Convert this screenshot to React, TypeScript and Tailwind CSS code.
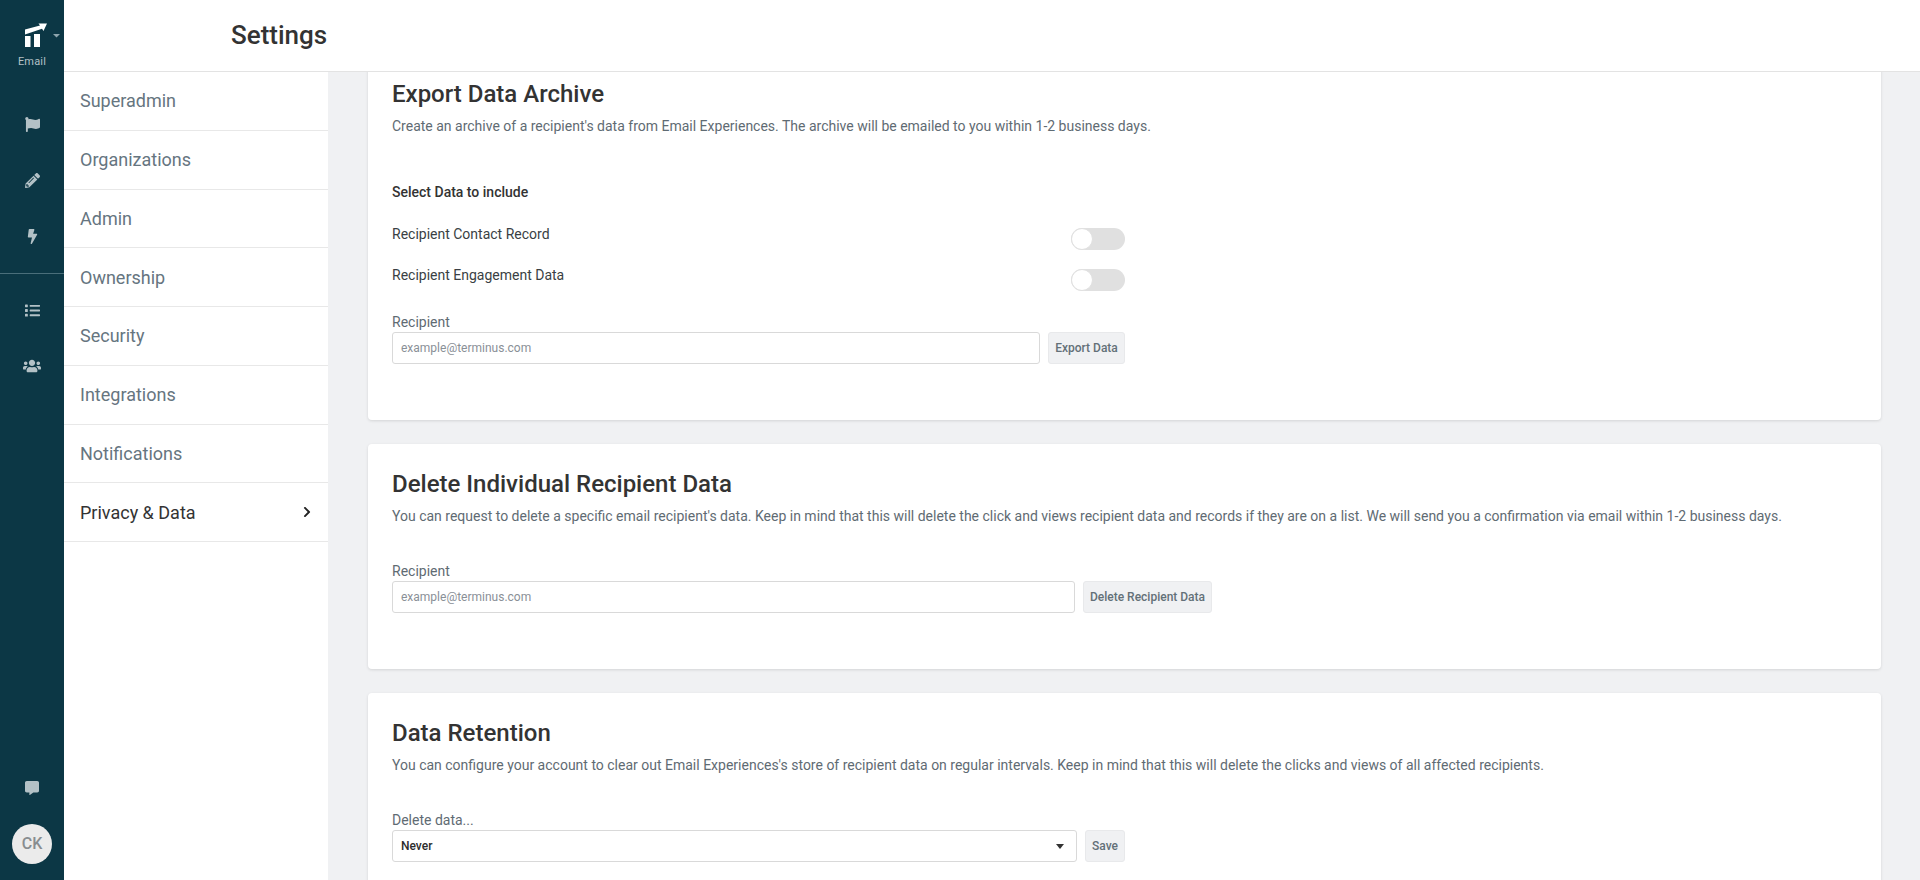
import React from "react";
import { FaFlag, FaPencilAlt, FaBolt, FaList, FaUsers, FaCommentAlt, FaChevronRight } from "react-icons/fa";

const nav = ["Superadmin", "Organizations", "Admin", "Ownership", "Security", "Integrations", "Notifications", "Privacy & Data"];

function Logo() {
  return (
    <svg width="64" height="50" viewBox="0 0 64 50" className="block">
      <path fill="#fff" d="M25 29.5 L40 25.5 L38.5 23.5 L47 23.5 L43.5 31 L42 28.8 L25 34.5 Z" />
      <rect x="25" y="36" width="5.5" height="11" fill="#fff" />
      <rect x="34" y="34" width="6" height="13" fill="#fff" />
      <path fill="#8ea5ad" d="M53 34 L60 34 L56.5 37.5 Z" />
    </svg>
  );
}

function RailIcon({ children }: { children: React.ReactNode }) {
  return <div className="h-[56px] flex items-center justify-center text-[#b3c1c6]">{children}</div>;
}

function Toggle() {
  return (
    <div className="w-[54px] h-[22px] rounded-full bg-[#e0e0e0] flex items-center">
      <div className="w-[22px] h-[22px] rounded-full bg-white border border-[#e0e0e0]" />
    </div>
  );
}

function Field({ label, placeholder, value, select, width, btn, btnW }: { label: string; placeholder?: string; value?: string; select?: boolean; width: string; btn: string; btnW: string }) {
  return (
    <div>
      <div className="text-[14px] leading-[20px] text-[#5f6b73]">{label}</div>
      <div className="flex gap-2">
        <div className={`${width} h-[32px] rounded-[3px] border border-[#d9d9d9] bg-white px-2 flex items-center justify-between text-[12px]`}>
          {select ? <span className="font-medium text-[#2c2c2c]">{value}</span> : <span className="text-[#8a9097]">{placeholder}</span>}
          {select && <span className="w-0 h-0 border-x-[4px] border-x-transparent border-t-[5px] border-t-[#333] mr-[4px]" />}
        </div>
        <button className={`${btnW} h-[32px] rounded-[3px] bg-[#f0f1f3] border border-[#e8e9eb] text-[12px] font-medium text-[#637078] flex items-center justify-center`}>{btn}</button>
      </div>
    </div>
  );
}

function Card({ title, desc, children, className }: { title: string; desc: string; children: React.ReactNode; className: string }) {
  return (
    <section className={`bg-white rounded-[4px] shadow-[0_1px_3px_rgba(0,0,0,0.12)] px-6 pt-6 ${className}`}>
      <h2 className="text-[24px] leading-[32px] font-medium text-[#333]">{title}</h2>
      <p className="mt-[6px] text-[14px] leading-[20px] text-[#5f6b73]">{desc}</p>
      {children}
    </section>
  );
}

export default function App() {
  return (
    <div className="flex h-screen w-full overflow-hidden bg-white font-['Roboto',sans-serif]">
      <aside className="w-16 shrink-0 bg-[#0c3745] flex flex-col">
        <Logo />
        <div className="mt-[5px] text-center text-[11px] leading-[13px] text-[#b3c1c6] tracking-[0.2px]">Email</div>
        <div className="mt-[28px]">
          <RailIcon><FaFlag size={15} /></RailIcon>
          <RailIcon><FaPencilAlt size={15} /></RailIcon>
          <RailIcon><FaBolt size={15} /></RailIcon>
        </div>
        <div className="h-px bg-[#4a6e7a] mt-[9px] mb-[8px]" />
        <RailIcon><FaList size={15} /></RailIcon>
        <RailIcon><FaUsers size={18} /></RailIcon>
        <div className="mt-auto flex flex-col items-center pb-4">
          <FaCommentAlt size={14} className="text-[#b3c1c6] mb-[29px]" />
          <div className="w-10 h-10 rounded-full bg-[#ebebeb] text-[#888d90] font-medium text-[16px] flex items-center justify-center">CK</div>
        </div>
      </aside>
      <div className="flex-1 min-w-0 flex flex-col">
        <header className="h-[72px] shrink-0 border-b border-[#e3e3e3] flex items-center pl-[167px]">
          <h1 className="text-[26px] font-medium text-[#333]">Settings</h1>
        </header>
        <div className="flex-1 min-h-0 flex">
          <nav className="w-[264px] shrink-0 bg-white">
            {nav.map((n, i) => (
              <div key={n} className={`h-[58.75px] border-b border-[#e8e8e8] pl-4 pr-[15px] flex items-center justify-between text-[18px] ${i === 7 ? "text-[#333]" : "text-[#66757f]"}`}>
                <span>{n}</span>
                {i === 7 && <FaChevronRight size={12} className="text-[#222]" />}
              </div>
            ))}
          </nav>
          <main className="flex-1 min-w-0 overflow-hidden bg-[#f0f1f3] pl-10 pr-[39px]">
            <div className="-mt-[18px] flex flex-col gap-6">
              <Card title="Export Data Archive" desc="Create an archive of a recipient's data from Email Experiences. The archive will be emailed to you within 1-2 business days." className="h-[366px]">
                <div className="mt-[46px] w-[733px]">
                  <div className="text-[14px] leading-[20px] font-medium text-[#333]">Select Data to include</div>
                  <div className="mt-[22px] flex justify-between items-start h-[41px] text-[14px] leading-[20px] text-[#3a3f44]">
                    <span>Recipient Contact Record</span>
                    <span className="mt-1"><Toggle /></span>
                  </div>
                  <div className="flex justify-between items-start h-[41px] text-[14px] leading-[20px] text-[#3a3f44]">
                    <span>Recipient Engagement Data</span>
                    <span className="mt-1"><Toggle /></span>
                  </div>
                  <div className="mt-[6px]">
                    <Field label="Recipient" placeholder="example@terminus.com" width="w-[648px]" btn="Export Data" btnW="w-[77px]" />
                  </div>
                </div>
              </Card>
              <Card title="Delete Individual Recipient Data" desc="You can request to delete a specific email recipient's data. Keep in mind that this will delete the click and views recipient data and records if they are on a list. We will send you a confirmation via email within 1-2 business days." className="h-[225px]">
                <div className="mt-[35px]">
                  <Field label="Recipient" placeholder="example@terminus.com" width="w-[683px]" btn="Delete Recipient Data" btnW="w-[129px]" />
                </div>
              </Card>
              <Card title="Data Retention" desc="You can configure your account to clear out Email Experiences's store of recipient data on regular intervals. Keep in mind that this will delete the clicks and views of all affected recipients." className="h-[225px]">
                <div className="mt-[35px]">
                  <Field label="Delete data..." value="Never" select width="w-[685px]" btn="Save" btnW="w-[40px]" />
                </div>
              </Card>
            </div>
          </main>
        </div>
      </div>
    </div>
  );
}
